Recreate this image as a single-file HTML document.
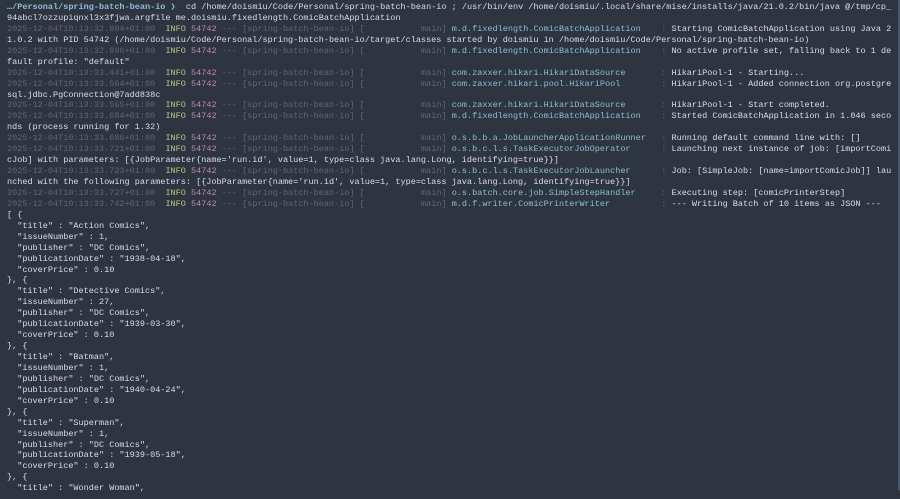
<!DOCTYPE html>
<html><head><meta charset="utf-8"><style>
html,body{margin:0;padding:0;background:#2e3440;width:900px;height:499px;overflow:hidden}
#t{position:absolute;left:7px;top:2px;font-family:"Liberation Mono",monospace;font-size:8.53px;line-height:10.93px;color:#d8dee9;white-space:pre}
.d{color:#5f6675}.g{color:#b9c97f}.m{color:#b48ead}.c{color:#88c0d0}.p{color:#88c0d0;font-weight:bold}.w{color:#e5e9f0}
#sb{position:absolute;right:0;top:0;width:2px;height:490px;background:#4c566a}
</style></head><body>
<div id="t"><span class="p">…/Personal/spring-batch-bean-io</span> <span class="c">❯</span>  cd /home/doismiu/Code/Personal/spring-batch-bean-io ; /usr/bin/env /home/doismiu/.local/share/mise/installs/java/21.0.2/bin/java @/tmp/cp_
94abcl7ozzupiqnxl3x3fjwa.argfile me.doismiu.fixedlength.ComicBatchApplication
<span class="d">2025-12-04T10:13:32.894+01:00</span>  <span class="g">INFO</span> <span class="m">54742</span> <span class="d">--- [spring-batch-bean-io] [           main]</span> <span class="c">m.d.fixedlength.ComicBatchApplication   </span> <span class="d">:</span> Starting ComicBatchApplication using Java 2
1.0.2 with PID 54742 (/home/doismiu/Code/Personal/spring-batch-bean-io/target/classes started by doismiu in /home/doismiu/Code/Personal/spring-batch-bean-io)
<span class="d">2025-12-04T10:13:32.896+01:00</span>  <span class="g">INFO</span> <span class="m">54742</span> <span class="d">--- [spring-batch-bean-io] [           main]</span> <span class="c">m.d.fixedlength.ComicBatchApplication   </span> <span class="d">:</span> No active profile set, falling back to 1 de
fault profile: "default"
<span class="d">2025-12-04T10:13:33.441+01:00</span>  <span class="g">INFO</span> <span class="m">54742</span> <span class="d">--- [spring-batch-bean-io] [           main]</span> <span class="c">com.zaxxer.hikari.HikariDataSource      </span> <span class="d">:</span> HikariPool-1 - Starting...
<span class="d">2025-12-04T10:13:33.564+01:00</span>  <span class="g">INFO</span> <span class="m">54742</span> <span class="d">--- [spring-batch-bean-io] [           main]</span> <span class="c">com.zaxxer.hikari.pool.HikariPool       </span> <span class="d">:</span> HikariPool-1 - Added connection org.postgre
sql.jdbc.PgConnection@7add838c
<span class="d">2025-12-04T10:13:33.565+01:00</span>  <span class="g">INFO</span> <span class="m">54742</span> <span class="d">--- [spring-batch-bean-io] [           main]</span> <span class="c">com.zaxxer.hikari.HikariDataSource      </span> <span class="d">:</span> HikariPool-1 - Start completed.
<span class="d">2025-12-04T10:13:33.684+01:00</span>  <span class="g">INFO</span> <span class="m">54742</span> <span class="d">--- [spring-batch-bean-io] [           main]</span> <span class="c">m.d.fixedlength.ComicBatchApplication   </span> <span class="d">:</span> Started ComicBatchApplication in 1.046 seco
nds (process running for 1.32)
<span class="d">2025-12-04T10:13:33.686+01:00</span>  <span class="g">INFO</span> <span class="m">54742</span> <span class="d">--- [spring-batch-bean-io] [           main]</span> <span class="c">o.s.b.b.a.JobLauncherApplicationRunner  </span> <span class="d">:</span> Running default command line with: []
<span class="d">2025-12-04T10:13:33.721+01:00</span>  <span class="g">INFO</span> <span class="m">54742</span> <span class="d">--- [spring-batch-bean-io] [           main]</span> <span class="c">o.s.b.c.l.s.TaskExecutorJobOperator     </span> <span class="d">:</span> Launching next instance of job: [importComi
cJob] with parameters: [{JobParameter{name='run.id', value=1, type=class java.lang.Long, identifying=true}}]
<span class="d">2025-12-04T10:13:33.723+01:00</span>  <span class="g">INFO</span> <span class="m">54742</span> <span class="d">--- [spring-batch-bean-io] [           main]</span> <span class="c">o.s.b.c.l.s.TaskExecutorJobLauncher     </span> <span class="d">:</span> Job: [SimpleJob: [name=importComicJob]] lau
nched with the following parameters: [{JobParameter{name='run.id', value=1, type=class java.lang.Long, identifying=true}}]
<span class="d">2025-12-04T10:13:33.727+01:00</span>  <span class="g">INFO</span> <span class="m">54742</span> <span class="d">--- [spring-batch-bean-io] [           main]</span> <span class="c">o.s.batch.core.job.SimpleStepHandler    </span> <span class="d">:</span> Executing step: [comicPrinterStep]
<span class="d">2025-12-04T10:13:33.742+01:00</span>  <span class="g">INFO</span> <span class="m">54742</span> <span class="d">--- [spring-batch-bean-io] [           main]</span> <span class="c">m.d.f.writer.ComicPrinterWriter         </span> <span class="d">:</span> --- Writing Batch of 10 items as JSON ---
[ {
  "title" : "Action Comics",
  "issueNumber" : 1,
  "publisher" : "DC Comics",
  "publicationDate" : "1938-04-18",
  "coverPrice" : 0.10
}, {
  "title" : "Detective Comics",
  "issueNumber" : 27,
  "publisher" : "DC Comics",
  "publicationDate" : "1939-03-30",
  "coverPrice" : 0.10
}, {
  "title" : "Batman",
  "issueNumber" : 1,
  "publisher" : "DC Comics",
  "publicationDate" : "1940-04-24",
  "coverPrice" : 0.10
}, {
  "title" : "Superman",
  "issueNumber" : 1,
  "publisher" : "DC Comics",
  "publicationDate" : "1939-05-18",
  "coverPrice" : 0.10
}, {
  "title" : "Wonder Woman",</div>
<div id="sb"></div>
</body></html>
